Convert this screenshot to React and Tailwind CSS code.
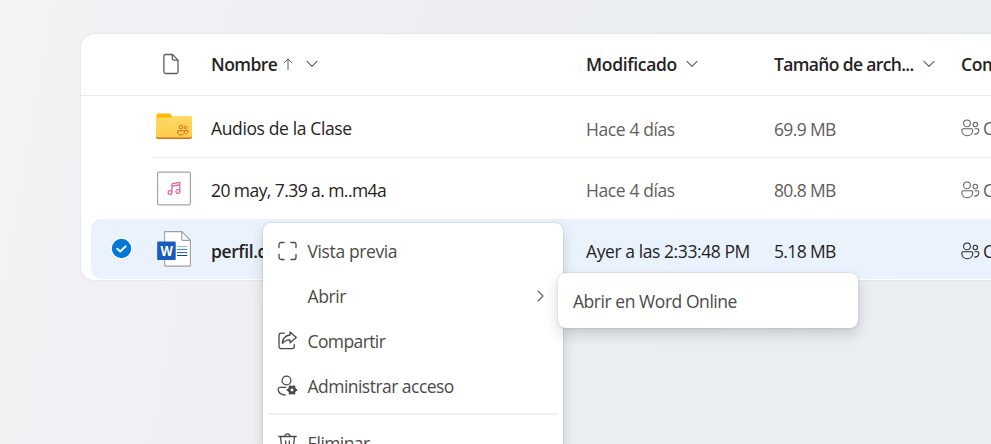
const stroke = {
  fill: 'none',
  stroke: 'currentColor',
  strokeLinecap: 'round',
  strokeLinejoin: 'round',
};

function PeopleIcon({ className }) {
  return (
    <svg viewBox="0 0 20 20" className={className} {...stroke} strokeWidth="1.05">
      <circle cx="7" cy="4.9" r="3.4" />
      <circle cx="15.3" cy="6" r="2.2" />
      <path d="M1.9 11.3a1 1 0 0 1 1-1h8.8a1 1 0 0 1 1 1v1c0 3.1-2.4 5-5.4 5s-5.4-1.9-5.4-5z" />
      <path d="M15 10.3h2.8a1 1 0 0 1 1 1v.7c0 2.4-1.9 3.7-4.2 3.6" />
    </svg>
  );
}

function DocumentIcon() {
  return (
    <svg viewBox="0 0 18 22" className="h-[22px] w-[18px] text-[#5f5e5d]" {...stroke} strokeWidth="1.3">
      <path d="M3.7 1.5h6.8l5.5 5.6v11.6a1.8 1.8 0 0 1-1.8 1.8H3.7a1.8 1.8 0 0 1-1.8-1.8V3.3a1.8 1.8 0 0 1 1.8-1.8z" />
      <path d="M10.3 1.7v3.8a1.6 1.6 0 0 0 1.6 1.6h3.9" />
    </svg>
  );
}

function ArrowUp() {
  return (
    <svg viewBox="0 0 10 12" className="h-3 w-2.5 text-[#605e5c]" {...stroke} strokeWidth="1">
      <path d="M5 11.5V1M1 5l4-4 4 4" />
    </svg>
  );
}

function ChevronDown() {
  return (
    <svg viewBox="0 0 12 8" className="h-2 w-3 text-[#605e5c]" {...stroke} strokeWidth="1.1">
      <path d="M1 1.3l5 5 5-5" />
    </svg>
  );
}

function FolderIcon() {
  return (
    <svg viewBox="0 0 36 28" className="h-7 w-9 -translate-y-[0.5px]">
      <defs>
        <linearGradient id="folder" x1="0" y1="0" x2="0" y2="1">
          <stop offset="0" stopColor="#ffd965" />
          <stop offset="1" stopColor="#ffcc4c" />
        </linearGradient>
      </defs>
      <path d="M0 6h36v18.8a1.8 1.8 0 0 1-1.8 1.8H1.8A1.8 1.8 0 0 1 0 24.8z" fill="#d0741a" />
      <path d="M0 4h14l2-.6h18.5a1.5 1.5 0 0 1 1.5 1.5v18.5a1.5 1.5 0 0 1-1.5 1.5h-33a1.5 1.5 0 0 1-1.5-1.5z" fill="url(#folder)" />
      <path d="M1.8.9h11.4c1.2 0 2 1.2 2.8 2.1-.8.9-1.6 2.1-2.8 2.1H.6V2.1A1.2 1.2 0 0 1 1.8.9z" fill="#ffb900" />
      <g fill="none" stroke="#cd6f1c" strokeWidth="1">
        <circle cx="25" cy="14.6" r="1.8" />
        <circle cx="29.6" cy="15" r="1.3" />
        <path d="M21.6 18.3h6.8v1.2c0 1.9-1.5 3-3.4 3s-3.4-1.1-3.4-3zM28.8 18h3.1v1.3c0 1.3-.9 2.1-2.5 2.1" strokeLinejoin="round" />
      </g>
    </svg>
  );
}

function AudioIcon() {
  return (
    <svg viewBox="0 0 36 36" className="size-9 -translate-y-[0.5px]">
      <rect x="1.6" y="1.6" width="32.8" height="32.8" rx="1.3" fill="#fff" stroke="#a5a5a5" strokeWidth="1.2" />
      <g fill="none" stroke="#e0609a" strokeWidth="1.2" strokeLinejoin="round">
        <circle cx="14" cy="22" r="1.9" />
        <circle cx="21.9" cy="20.9" r="1.9" />
        <path d="M15.9 22v-8.6l7.9-1.6v9.1M15.9 15.8l7.9-1.6" />
      </g>
    </svg>
  );
}

function WordIcon() {
  return (
    <svg viewBox="0 0 36 38" className="h-[38px] w-9">
      <path d="M8.6 1.6h17.2l8.6 8.7v24.8a1 1 0 0 1-1 1H9.6a1 1 0 0 1-1-1z" fill="#fff" stroke="#a0a0a0" strokeWidth="1.1" />
      <path d="M25.7 1.8v7.6a1 1 0 0 0 1 1h7.5" fill="none" stroke="#a0a0a0" strokeWidth="1.1" />
      <path d="M21 16.5h10.3" stroke="#83beec" strokeWidth="1" />
      <path d="M21 19.5h10.3" stroke="#3c91dd" strokeWidth="1" />
      <path d="M21 22.5h10.3" stroke="#2168c0" strokeWidth="1" />
      <path d="M21 25.5h10.3" stroke="#1c438a" strokeWidth="1" />
      <rect x="1.2" y="11.5" width="18.5" height="18.5" rx="1" fill="#185abd" />
      <text x="10.4" y="25.6" textAnchor="middle" fontSize="14" fontWeight="700" fill="#fff" fontFamily="Open Sans, sans-serif" textLength="12" lengthAdjust="spacingAndGlyphs">W</text>
    </svg>
  );
}

function SelectedMark() {
  return (
    <svg viewBox="0 0 22 22" className="size-[22px] -translate-x-[0.5px] -translate-y-[0.5px]">
      <circle cx="11" cy="11" r="10.8" fill="#fff" />
      <circle cx="11" cy="11" r="9.7" fill="#0078d7" />
      <path d="M6.8 11.2l2.9 2.7 5.3-5" fill="none" stroke="#fff" strokeWidth="2" strokeLinecap="round" />
    </svg>
  );
}

function PreviewIcon() {
  return (
    <svg viewBox="0 0 20 20" className="size-5" {...stroke} strokeWidth="1.3">
      <path d="M1.5 6.5V3.5a2 2 0 0 1 2-2h3M13.5 1.5h3a2 2 0 0 1 2 2v3M18.5 13.5v3a2 2 0 0 1-2 2h-3M6.5 18.5h-3a2 2 0 0 1-2-2v-3" />
    </svg>
  );
}

function ShareIcon() {
  return (
    <svg viewBox="0 0 20 20" className="size-5" {...stroke} strokeWidth="1.3">
      <path d="M7 2.1H3.8a2.3 2.3 0 0 0-2.3 2.3v10.9a2.3 2.3 0 0 0 2.3 2.3h10.7a2.3 2.3 0 0 0 2.3-2.3V13.5" />
      <path d="M12.5.9l6.3 5.5-6.3 5.4V8.8c-3.5-.2-5.6.9-7.7 3.6.4-4.3 3-7.9 7.7-8.4z" />
    </svg>
  );
}

function PersonGearIcon() {
  return (
    <svg viewBox="0 0 20 20" className="size-5 overflow-visible" {...stroke} strokeWidth="1.3">
      <circle cx="9" cy="4.5" r="4.4" />
      <path d="M8.2 11.4H2.6A1.9 1.9 0 0 0 .7 13.3c0 3.7 3.1 5.5 6.9 5.7" />
      <circle cx="14.5" cy="14" r="2.8" strokeWidth="2.7" />
      <path d="M11.3 14H9.3M17.7 14h2M12.9 11.3l-1-1.7M16.1 11.3l1-1.7M12.9 16.7l-1 1.7M16.1 16.7l1 1.7" strokeWidth="2.1" strokeLinecap="butt" />
    </svg>
  );
}

function TrashIcon() {
  return (
    <svg viewBox="0 0 20 20" className="size-5" {...stroke} strokeWidth="1.3">
      <path d="M1.3 3.5h17.4M7.5 3.3a2.5 2.5 0 0 1 5 0M3 3.7l1.4 13.1a2 2 0 0 0 2 1.7h7.2a2 2 0 0 0 2-1.7L17 3.7M8.2 8v7M11.8 8v7" />
    </svg>
  );
}

const files = [
  {
    name: 'Audios de la Clase',
    nameStyle: 'pt-[3px] tracking-[-0.37px]',
    icon: <FolderIcon />,
    modified: 'Hace 4 días',
    modifiedStyle: 'pt-1 tracking-[-0.4px]',
    size: '69.9 MB',
    sizeStyle: 'pt-1 tracking-[-0.65px]',
    rowStyle: 'h-[62px]',
    bodyStyle: 'border-b border-[#edebe9]',
    tone: 'text-[#605e5c]',
  },
  {
    name: '20 may, 7.39 a. m..m4a',
    nameStyle: 'pt-0.5 tracking-[-0.57px]',
    icon: <AudioIcon />,
    modified: 'Hace 4 días',
    modifiedStyle: 'pt-0.5 tracking-[-0.4px]',
    size: '80.8 MB',
    sizeStyle: 'pt-0.5 tracking-[-0.65px]',
    rowStyle: 'h-[61px]',
    bodyStyle: '',
    tone: 'text-[#605e5c]',
  },
  {
    name: 'perfil.docx',
    nameStyle: 'pt-1 font-semibold tracking-[-0.4px]',
    icon: <WordIcon />,
    modified: 'Ayer a las 2:33:48 PM',
    modifiedStyle: 'pt-1 tracking-[-0.42px]',
    size: '5.18 MB',
    sizeStyle: 'pt-1 tracking-[-0.65px]',
    selected: true,
    rowStyle: 'h-[60px] bg-[#eaf3fd]',
    bodyStyle: '',
    tone: 'text-[#252423]',
  },
];

function FileRow({ file }) {
  return (
    <div className={`ml-2.5 flex items-stretch rounded-l-[10px] ${file.rowStyle}`}>
      <div className="flex w-[61px] shrink-0 items-center justify-center">
        {file.selected && <SelectedMark />}
      </div>
      <div className={`flex flex-1 items-center ${file.bodyStyle}`}>
        <div className="flex w-[59px] shrink-0 pl-1">{file.icon}</div>
        <div className={`w-[375px] shrink-0 text-[#252423] ${file.nameStyle}`}>{file.name}</div>
        <div className={`w-[188px] shrink-0 ${file.modifiedStyle} ${file.tone}`}>{file.modified}</div>
        <div className={`w-[187px] shrink-0 ${file.sizeStyle} ${file.tone}`}>{file.size}</div>
        <div className={`flex shrink-0 items-center gap-[3px] pt-[3px] ${file.tone}`}>
          <PeopleIcon className="-ml-px size-5 translate-y-[0.5px]" />
          <span>Compartido</span>
        </div>
      </div>
    </div>
  );
}

function MenuItem({ icon, label, labelStyle, submenu }) {
  return (
    <div className="flex h-[45px] shrink-0 items-center pl-3.5 pr-[18px]">
      <span className="flex w-[30.5px] shrink-0 -translate-y-px translate-x-[0.5px]">{icon}</span>
      <span className={`flex-1 pb-0.5 ${labelStyle}`}>{label}</span>
      {submenu && (
        <svg viewBox="0 0 8 12" className="h-3 w-2 -translate-x-[0.5px] -translate-y-px text-[#605e5c]" {...stroke} strokeWidth="1.1">
          <path d="M1.5 1l5 5-5 5" />
        </svg>
      )}
    </div>
  );
}

export default function App() {
  return (
    <div className="relative h-[444px] w-[991px] overflow-hidden bg-[linear-gradient(100deg,#f3f3f5_0%,#f0eff4_22%,#ebeef3_58%,#e9eef2_100%)] pl-[81px] pt-[34px] font-['Open_Sans','Noto_Sans',sans-serif] text-[17.5px] font-normal leading-6 tracking-[-0.4px]">
      <div className="h-[246px] w-[1100px] rounded-[13px] bg-white shadow-[0_0_2px_rgba(0,0,0,0.12)]">
        <div className="flex h-[62px] items-center border-b border-[#edebe9] pb-0.5 pl-[81px] font-semibold text-[#252423]">
          <div className="flex w-[49px] shrink-0"><DocumentIcon /></div>
          <div className="flex w-[375px] shrink-0 items-center">
            <span className="mr-1.5 tracking-[-0.55px]">Nombre</span>
            <ArrowUp />
            <span className="ml-[13px]"><ChevronDown /></span>
          </div>
          <div className="flex w-[188px] shrink-0 items-center gap-[9px]">
            <span className="tracking-[-0.33px]">Modificado</span>
            <ChevronDown />
          </div>
          <div className="flex w-[187px] shrink-0 items-center gap-[9px]">
            <span className="tracking-[-0.65px]">Tamaño de arch...</span>
            <ChevronDown />
          </div>
          <div className="shrink-0 tracking-[-0.4px]">Compartir</div>
        </div>
        {files.map((file) => (
          <FileRow key={file.name} file={file} />
        ))}
      </div>

      <div className="absolute left-[263px] top-[223px] flex h-[260px] w-[300px] flex-col rounded-lg bg-white pt-1.5 text-[#4b4a48] shadow-[0_0_2px_rgba(0,0,0,0.2),0_6px_14px_rgba(0,0,0,0.16)]">
        <MenuItem icon={<PreviewIcon />} label="Vista previa" labelStyle="tracking-[-0.38px]" />
        <MenuItem label="Abrir" labelStyle="tracking-[-0.4px]" submenu />
        <MenuItem icon={<ShareIcon />} label="Compartir" labelStyle="tracking-[-0.6px]" />
        <MenuItem icon={<PersonGearIcon />} label="Administrar acceso" labelStyle="tracking-[-0.53px]" />
        <div className="mx-[5px] mb-1.5 mt-[4px] h-0.5 shrink-0 bg-[#f0f0f0]" />
        <MenuItem icon={<TrashIcon />} label="Eliminar" labelStyle="tracking-[-0.6px]" />
      </div>

      <div className="absolute left-[558px] top-[273px] flex h-[55px] w-[300px] items-center rounded-lg bg-white pl-[15px] text-[#4b4a48] shadow-[0_0_2px_rgba(0,0,0,0.2),0_6px_14px_rgba(0,0,0,0.16)]">
        <span className="tracking-[-0.45px]">Abrir en Word Online</span>
      </div>
    </div>
  );
}
